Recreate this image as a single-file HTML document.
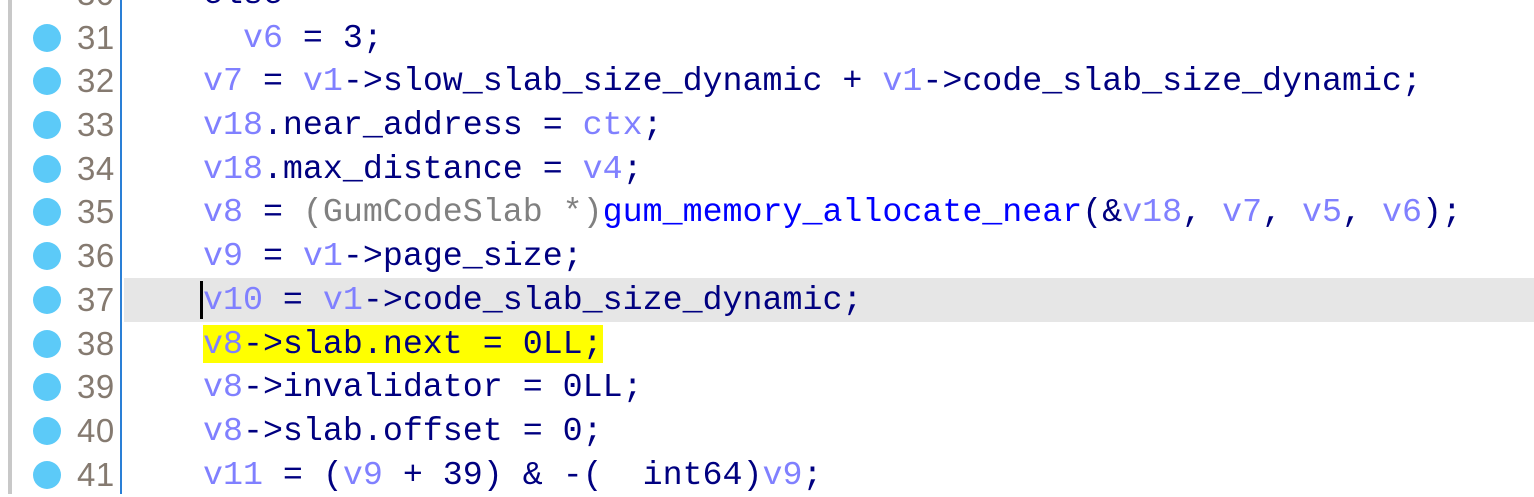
<!DOCTYPE html>
<html><head><style>
body{margin:0;width:1534px;height:494px;overflow:hidden;background:#fff;position:relative;font-family:"Liberation Mono",monospace;}
.gl{position:absolute;left:8px;top:0;width:4px;height:494px;background:#c8c8c8}
.bl{position:absolute;left:120px;top:0;width:2px;height:494px;background:#2a7fd6}
.row{position:absolute;left:0;width:1534px;height:44px;line-height:44px;font-size:33.3px;white-space:pre}
.dot{position:absolute;left:33px;top:8px;width:28px;height:28px;border-radius:50%;background:#5ccaf8}
.num{position:absolute;left:77px;color:#857a70;font-family:"Liberation Sans",sans-serif;font-size:33px;letter-spacing:0.5px}
.code{position:absolute;left:203px;color:#000080}
.v{color:#8080ff}.g{color:#808080}.f{color:#0000ff}
.hl{background:#ffff00}
</style></head><body>
<div class="gl"></div>
<div style="position:absolute;left:124px;top:278px;width:1410px;height:44px;background:#e6e6e6"></div>
<div class="bl"></div>
<div class="row" style="top:-28px"><span class="num">30</span><span class="code">else</span></div>
<div class="row" style="top:16px"><span class="dot"></span><span class="num">31</span><span class="code">  <span class="v">v6</span> = 3;</span></div>
<div class="row" style="top:59px"><span class="dot"></span><span class="num">32</span><span class="code"><span class="v">v7</span> = <span class="v">v1</span>-&gt;slow_slab_size_dynamic + <span class="v">v1</span>-&gt;code_slab_size_dynamic;</span></div>
<div class="row" style="top:103px"><span class="dot"></span><span class="num">33</span><span class="code"><span class="v">v18</span>.near_address = <span class="v">ctx</span>;</span></div>
<div class="row" style="top:147px"><span class="dot"></span><span class="num">34</span><span class="code"><span class="v">v18</span>.max_distance = <span class="v">v4</span>;</span></div>
<div class="row" style="top:190px"><span class="dot"></span><span class="num">35</span><span class="code"><span class="v">v8</span> = <span class="g">(GumCodeSlab *)</span><span class="f">gum_memory_allocate_near</span>(&amp;<span class="v">v18</span>, <span class="v">v7</span>, <span class="v">v5</span>, <span class="v">v6</span>);</span></div>
<div class="row" style="top:234px"><span class="dot"></span><span class="num">36</span><span class="code"><span class="v">v9</span> = <span class="v">v1</span>-&gt;page_size;</span></div>
<div class="row" style="top:278px"><span class="dot"></span><span class="num">37</span><span class="code"><span class="v">v10</span> = <span class="v">v1</span>-&gt;code_slab_size_dynamic;</span></div>
<div style="position:absolute;left:200px;top:281px;width:3px;height:38px;background:#000"></div>
<div class="row" style="top:322px"><span class="dot"></span><span class="num">38</span><span class="code"><span class="hl"><span class="v">v8</span>-&gt;slab.next = 0LL;</span></span></div>
<div class="row" style="top:365px"><span class="dot"></span><span class="num">39</span><span class="code"><span class="v">v8</span>-&gt;invalidator = 0LL;</span></div>
<div class="row" style="top:409px"><span class="dot"></span><span class="num">40</span><span class="code"><span class="v">v8</span>-&gt;slab.offset = 0;</span></div>
<div class="row" style="top:453px"><span class="dot"></span><span class="num">41</span><span class="code"><span class="v">v11</span> = (<span class="v">v9</span> + 39) &amp; -(  int64)<span class="v">v9</span>;</span></div>
</body></html>
